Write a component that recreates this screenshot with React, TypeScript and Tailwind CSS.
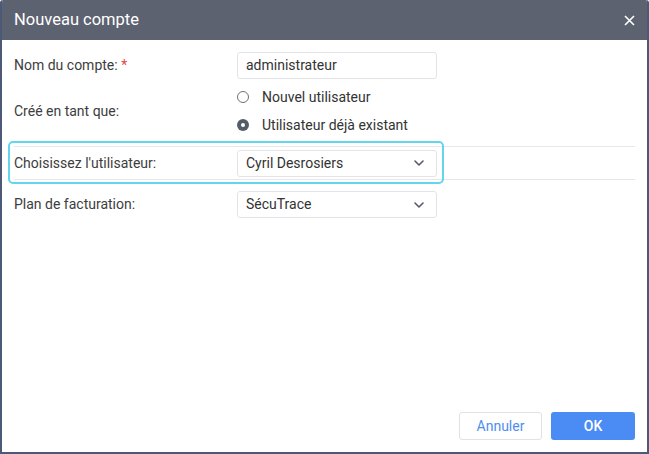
import { useState } from 'react';

function Chevron() {
  return (
    <svg className="w-[10px] h-[6px]" viewBox="0 0 10 6" fill="none" stroke="#555b66" strokeWidth={1.6}>
      <path d="M1 1l4 4 4-4" strokeLinecap="round" strokeLinejoin="round" />
    </svg>
  );
}

function Select({ value }: { value: string }) {
  return (
    <div className="w-[200px] h-[27px] border border-[#e2e4e8] rounded-[3px] flex items-center justify-between pl-[8px] pr-[12px] text-[14px] text-[#333]">
      <span>{value}</span>
      <Chevron />
    </div>
  );
}

function Radio({ checked, label, onClick }: { checked: boolean; label: string; onClick: () => void }) {
  return (
    <div className="h-[28px] flex items-center gap-[13px] cursor-pointer" onClick={onClick}>
      {checked ? (
        <span className="w-[12px] h-[12px] rounded-full bg-[#555c69] flex items-center justify-center">
          <span className="w-[4px] h-[4px] rounded-full bg-white" />
        </span>
      ) : (
        <span className="w-[12px] h-[12px] rounded-full border border-[#6b717c] bg-white" />
      )}
      <span className="text-[14px] text-[#333]">{label}</span>
    </div>
  );
}

export default function App() {
  const [mode, setMode] = useState<'new' | 'existing'>('existing');

  return (
    <div
      className="relative w-[649px] h-[454px] flex flex-col bg-white border-x-2 border-b-2 border-[#4d5a77] rounded-t-[3px] overflow-hidden"
      style={{ fontFamily: 'Roboto, "Liberation Sans", sans-serif' }}
    >
      {/* Header */}
      <div className="h-[40px] -mx-[2px] bg-[#5c6270] flex items-center justify-between pl-[14px] pr-[14px]">
        <h2 className="text-white text-[16.5px]">Nouveau compte</h2>
        <svg className="w-[11px] h-[11px]" viewBox="0 0 11 11" stroke="white" strokeWidth={1.6}>
          <path d="M1 1l9 9M10 1l-9 9" />
        </svg>
      </div>

      {/* Body */}
      <div className="flex-1 flex flex-col px-[12px] pt-[12px] text-[14px] text-[#3d3d3d]">
        <div className="flex items-center">
          <div className="w-[223px]">
            Nom du compte: <span className="text-[#e5473c]">*</span>
          </div>
          <div className="w-[200px] h-[27px] border border-[#e2e4e8] rounded-[3px] flex items-center px-[8px] text-[#333]">
            administrateur
          </div>
        </div>

        <div className="flex items-center mt-[4px]">
          <div className="w-[223px]">Créé en tant que:</div>
          <div className="flex flex-col">
            <Radio checked={mode === 'new'} label="Nouvel utilisateur" onClick={() => setMode('new')} />
            <Radio checked={mode === 'existing'} label="Utilisateur déjà existant" onClick={() => setMode('existing')} />
          </div>
        </div>

        <div className="flex items-center mt-[7px] h-[34px] border-y border-[#e6e7ea]">
          <div className="w-[223px]">Choisissez l'utilisateur:</div>
          <Select value="Cyril Desrosiers" />
        </div>

        <div className="flex items-center mt-[11px]">
          <div className="w-[223px]">Plan de facturation:</div>
          <Select value="SécuTrace" />
        </div>

        <div className="flex-1" />

        {/* Footer */}
        <div className="flex justify-end gap-[9px] pb-[12px]">
          <button className="w-[83px] h-[28px] border border-[#dfe2e6] rounded-[3px] text-[#4f8ef0] text-[14px] bg-white">
            Annuler
          </button>
          <button className="w-[84px] h-[28px] rounded-[3px] bg-[#4b8bf4] text-white text-[14px] font-medium">
            OK
          </button>
        </div>
      </div>

      {/* Focus highlight over the user row */}
      <div className="absolute left-[6px] top-[141px] w-[436px] h-[43px] border-2 border-[#62d6ec] rounded-[5px] pointer-events-none" />
    </div>
  );
}
